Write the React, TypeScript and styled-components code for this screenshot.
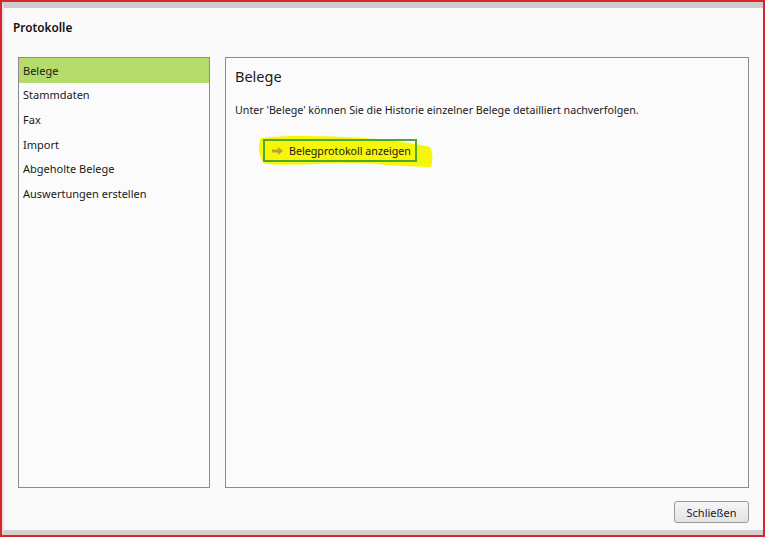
import React from "react";
import styled, { createGlobalStyle } from "styled-components";

const Global = createGlobalStyle`
  html, body { margin: 0; padding: 0; background: #fafafa; }
  body { font-family: "Noto Sans", "Open Sans", sans-serif; color: #1a1a1a; }
`;

const Frame = styled.div`
  width: 765px;
  height: 537px;
  box-sizing: border-box;
  border: 2px solid #d8262c;
  display: flex;
  flex-direction: column;
  background: #fafafa;
`;

const Window = styled.div`
  flex: 1;
  display: flex;
  flex-direction: column;
  border-top: 6px solid #cdcbcb;
  border-bottom: 5px solid #d4cfce;
  border-left: 2px solid #ece4e4;
  min-height: 0;
`;

const Header = styled.div`
  height: 49px;
  display: flex;
  align-items: flex-start;
  padding: 11px 0 0 9px;
  box-sizing: border-box;
`;

const Title = styled.h1`
  margin: 0;
  font-size: 11.8px;
  font-weight: 600;
  color: #111;
`;

const Content = styled.div`
  height: 431px;
  display: grid;
  grid-template-columns: 192px 524px;
  gap: 15px;
  padding-left: 14px;
`;

const List = styled.ul`
  list-style: none;
  margin: 0;
  padding: 0;
  border: 1px solid #8c8c8c;
  background: #fbfbfb;
`;

const Item = styled.li<{ $active?: boolean }>`
  height: 24.6px;
  display: flex;
  align-items: center;
  padding-left: 4px;
  font-size: 11px;
  background: ${(p) => (p.$active ? "#b5dc6b" : "transparent")};
  color: #1a1a1a;
`;

const Panel = styled.section`
  border: 1px solid #8c8c8c;
  background: #fbfbfb;
  padding: 8px 9px;
  display: flex;
  flex-direction: column;
`;

const PanelTitle = styled.h2`
  margin: 0;
  font-size: 14.5px;
  font-weight: 400;
  color: #1a1a1a;
`;

const Description = styled.p`
  margin: 17px 0 0;
  font-size: 10.7px;
  color: #1a1a1a;
`;

const ActionWrap = styled.div`
  position: relative;
  margin: 22px 0 0 28px;
  align-self: flex-start;
`;

const Highlight = styled.svg`
  position: absolute;
  left: -6px;
  top: -4px;
  width: 176px;
  height: 34px;
  pointer-events: none;
`;

const ActionButton = styled.button`
  position: relative;
  display: flex;
  align-items: center;
  gap: 5px;
  height: 23px;
  box-sizing: border-box;
  padding: 0 4px 0 6px;
  border: 2px solid #52a82c;
  background: transparent;
  font-family: inherit;
  font-size: 10.7px;
  color: #1a1a1a;
  cursor: pointer;
`;

const Footer = styled.div`
  flex: 1;
  display: flex;
  justify-content: flex-end;
  align-items: flex-start;
  padding: 13px 14px 0 0;
`;

const CloseButton = styled.button`
  width: 75px;
  height: 22px;
  border: 1px solid #9a9a9a;
  border-radius: 3px;
  background: linear-gradient(#f6f6f6, #e3e3e3);
  font-family: inherit;
  font-size: 11px;
  color: #1a1a1a;
  padding: 0;
`;

const items = ["Belege", "Stammdaten", "Fax", "Import", "Abgeholte Belege", "Auswertungen erstellen"];

export default function App() {
  return (
    <>
      <Global />
      <Frame>
        <Window>
          <Header>
            <Title>Protokolle</Title>
          </Header>
          <Content>
            <List>
              {items.map((it, i) => (
                <Item key={it} $active={i === 0}>{it}</Item>
              ))}
            </List>
            <Panel>
              <PanelTitle>Belege</PanelTitle>
              <Description>
                Unter 'Belege' können Sie die Historie einzelner Belege detailliert nachverfolgen.
              </Description>
              <ActionWrap>
                <Highlight viewBox="0 0 176 34">
                  <path
                    d="M4 3 C 30 0, 70 1, 105 3 C 135 5, 160 9, 173 12 C 176 18, 176 26, 174 32 C 150 32, 125 29, 100 28 C 70 28, 35 31, 8 29 C 2 24, 0 10, 4 3 Z"
                    fill="#f6f60a"
                  />
                </Highlight>
                <ActionButton>
                  <svg width="13" height="10" viewBox="0 0 13 10">
                    <path d="M1 3.5 H7 V1 L12 5 L7 9 V6.5 H1 Z" fill="#b9a52a" />
                  </svg>
                  Belegprotokoll anzeigen
                </ActionButton>
              </ActionWrap>
            </Panel>
          </Content>
          <Footer>
            <CloseButton>Schließen</CloseButton>
          </Footer>
        </Window>
      </Frame>
    </>
  );
}
